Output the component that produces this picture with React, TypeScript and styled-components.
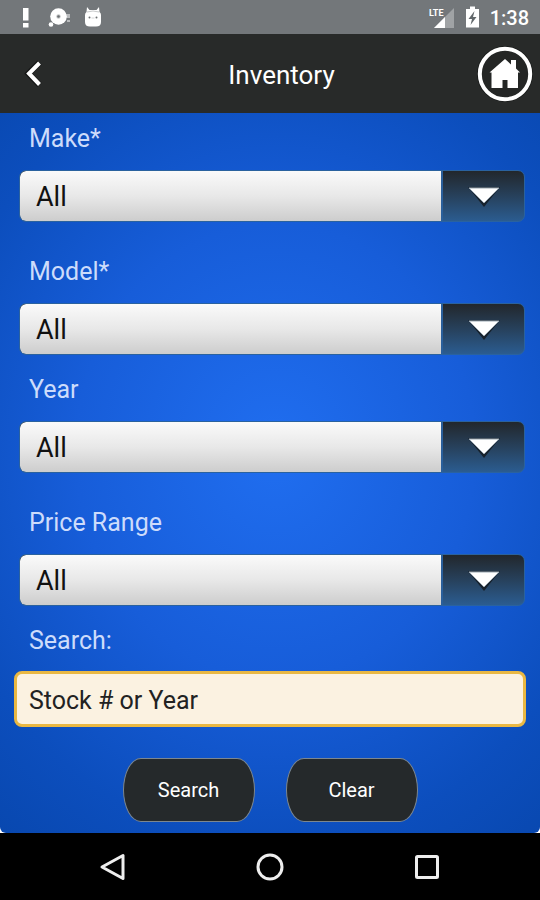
import React, { useState } from "react";
import styled, { createGlobalStyle } from "styled-components";

const GlobalStyle = createGlobalStyle`
  *, *::before, *::after { box-sizing: border-box; }
  body {
    margin: 0;
    font-family: Roboto, "Liberation Sans", sans-serif;
    background: #000;
  }
  button, input, select { font-family: inherit; }
`;

const Screen = styled.div`
  min-height: 100vh;
  display: flex;
  flex-direction: column;
`;

const StatusBar = styled.div`
  height: 34px;
  flex: none;
  display: flex;
  align-items: center;
  justify-content: space-between;
  padding: 0 11px 0 20px;
  background: #73777a;
  color: #fff;
`;

const StatusGroup = styled.div<{ $gap: number }>`
  display: flex;
  align-items: center;
  gap: ${(p) => p.$gap}px;
`;

const Clock = styled.time`
  font-size: 20px;
  line-height: 24px;
  font-weight: 500;
  padding-top: 2px;
`;

const Header = styled.header`
  height: 79px;
  flex: none;
  display: grid;
  grid-template-columns: 64px 1fr 64px;
  align-items: center;
  padding: 0 3px 0 2px;
  background: #282a29;
`;

const Title = styled.h1`
  margin: 0;
  color: #fff;
  font-size: 26px;
  line-height: 32px;
  font-weight: 400;
  text-align: center;
  padding: 2px 0 0 24px;
`;

const IconButton = styled.button`
  display: flex;
  align-items: center;
  justify-content: center;
  height: 64px;
  padding: 0;
  border: 0;
  background: transparent;
  cursor: pointer;
`;

const Backdrop = styled.div`
  flex: 1;
  display: flex;
  background: #fff;
`;

const Form = styled.form`
  flex: 1;
  display: flex;
  flex-direction: column;
  padding: 10px 14px 11px;
  border-radius: 0 0 6px 6px;
  background: radial-gradient(ellipse 82% 70% at 51% 47%, #206ef0 0%, #175dd9 45%, #0c4ebd 78%, #0847ae 100%);
`;

const FieldPair = styled.div`
  display: flex;
  flex-direction: column;
  gap: 34px;
  margin-bottom: 19px;
`;

const Field = styled.div<{ $gap: number }>`
  display: flex;
  flex-direction: column;
  gap: ${(p) => p.$gap}px;
`;

const Label = styled.label`
  padding-left: 15px;
  color: #cddcfb;
  font-size: 25px;
  line-height: 32px;
`;

const SelectFrame = styled.div`
  display: grid;
  grid-template-columns: 1fr 83px;
  height: 52px;
  margin: 0 1px 0 5px;
  border: 1px solid #2a629f;
  border-radius: 7px;
  overflow: hidden;
  background: linear-gradient(#22272c, #27415c 50%, #2b5c90);
`;

const Select = styled.select`
  grid-area: 1 / 1 / 2 / 3;
  appearance: none;
  width: 100%;
  height: 50px;
  padding: 2px 98px 0 16px;
  border: 0;
  border-radius: 6px;
  color: #111;
  font-size: 27px;
  background: linear-gradient(#fafafa, #e8e8e8 50%, #cdcdcd) left / calc(100% - 83px) 100% no-repeat;
  cursor: pointer;
`;

const ArrowCell = styled.span`
  grid-area: 1 / 2;
  display: flex;
  align-items: center;
  justify-content: center;
  border-left: 2px solid #2a5f9b;
  pointer-events: none;
  z-index: 1;
`;

const SearchInput = styled.input`
  height: 56px;
  width: 100%;
  padding: 2px 12px 0;
  border: 3px solid #e9b843;
  border-radius: 8px;
  background: #fbf2e1;
  color: #222;
  font-size: 25px;
  &::placeholder { color: #222; opacity: 1; }
`;

const Actions = styled.div`
  display: flex;
  justify-content: center;
  gap: 31px;
  margin-top: auto;
  padding-top: 28px;
`;

const ActionButton = styled.button`
  width: 132px;
  height: 64px;
  padding: 0;
  border: 1px solid #7c8790;
  border-radius: 18px / 32px;
  background: #25292b;
  color: #fff;
  font-size: 20px;
  cursor: pointer;
`;

const NavBar = styled.nav`
  height: 67px;
  flex: none;
  display: grid;
  grid-template-columns: repeat(3, 1fr);
  align-items: end;
  padding: 0 34px 1px;
  background: #000;
`;

const choices: Record<string, string[]> = {
  make: ["All"],
  model: ["All"],
  year: ["All"],
  price: ["All"],
};

function SelectField({ id, label }: { id: string; label: string }) {
  return (
    <Field $gap={15}>
      <Label htmlFor={id}>{label}</Label>
      <SelectFrame>
        <Select id={id} name={id}>
          {choices[id].map((c) => (
            <option key={c}>{c}</option>
          ))}
        </Select>
        <ArrowCell aria-hidden="true">
          <svg width="36" height="24" viewBox="0 0 36 24">
            <path d="M2 3H34L18 23Z" fill="#17222d" />
            <path d="M3 4H33L18 19Z" fill="#fff" stroke="#9aa7b2" strokeWidth="1" />
          </svg>
        </ArrowCell>
      </SelectFrame>
    </Field>
  );
}

export default function App() {
  const [query, setQuery] = useState("");
  return (
    <Screen>
      <GlobalStyle />
      <StatusBar>
        <StatusGroup $gap={14}>
          <svg width="12" height="22" viewBox="0 0 12 22" fill="#fff" aria-hidden="true">
            <path d="M3 2H8.500V14.500H3ZM3 17H8.500V21.500H3Z" />
          </svg>
          <svg width="24" height="22" viewBox="0 0 24 22" fill="#fff" aria-hidden="true">
            <circle cx="12.500" cy="10.500" r="8.300" />
            <circle cx="5" cy="18.500" r="2.300" />
            <path d="M20 8H24V12H20ZM21 14H24V16H21Z" opacity="0.5" />
            <circle cx="12.500" cy="10.500" r="2.200" fill="#c5c7c8" />
            <circle cx="12.500" cy="10.500" r="1.300" fill="#6c7072" />
          </svg>
          <svg width="18" height="22" viewBox="0 0 18 22" aria-hidden="true">
            <path d="M3 1L5.500 4H12.500L15 1L15.500 6Q17 7 17 9V16Q17 20.500 12 20.500H6Q1 20.500 1 16V9Q1 7 2.500 6Z" fill="#fff" />
            <path d="M3 6Q9 4 15 6" stroke="#c7c9ca" fill="none" />
            <circle cx="5.500" cy="11.500" r="1" fill="#6c7072" />
            <circle cx="12.500" cy="11.500" r="1" fill="#6c7072" />
            <path d="M7.500 12H10.500" stroke="#d5d7d8" />
          </svg>
        </StatusGroup>
        <StatusGroup $gap={10}>
          <svg width="26" height="24" viewBox="0 0 26 24" aria-label="LTE signal" role="img">
            <path d="M25 3V23H5Z" fill="#a0a3a5" />
            <path d="M16 12V23H5Z" fill="#fff" />
            <path d="M0 2H15V13H0Z" fill="#73777a" />
            <text x="0" y="11" fontSize="9" fontFamily="Roboto, sans-serif" fontWeight="700" fill="#fff">LTE</text>
          </svg>
          <svg width="15" height="22" viewBox="0 0 15 22" aria-hidden="true">
            <path d="M5 0.500H10V3H14V21.500H1V3H5Z" fill="#fff" />
            <path d="M9.500 5L3.500 13H7L5.500 19L11.500 11H8Z" fill="#62686b" />
          </svg>
          <Clock>1:38</Clock>
        </StatusGroup>
      </StatusBar>

      <Header>
        <IconButton type="button" aria-label="Back">
          <svg width="28" height="32" viewBox="0 0 28 32" fill="none">
            <path d="M19.500 4.500L8.500 15.500L19.500 27" stroke="#000" strokeWidth="6" opacity="0.5" />
            <path d="M19.500 5L9 15.500L19.500 26.500" stroke="#fff" strokeWidth="4" />
          </svg>
        </IconButton>
        <Title>Inventory</Title>
        <IconButton type="button" aria-label="Home">
          <svg width="58" height="58" viewBox="0 0 58 58">
            <circle cx="29" cy="29" r="28" fill="#171918" />
            <circle cx="29" cy="29" r="25.200" fill="#242625" stroke="#fff" strokeWidth="4" />
            <path d="M29 14L35 19.500V15H40V23.500L44 27.500H42V43H31.500V35H26.500V43H15.500V27.500H13.500Z" fill="#fff" />
          </svg>
        </IconButton>
      </Header>

      <Backdrop>
        <Form onSubmit={(e) => e.preventDefault()} onReset={() => setQuery("")}>
          <FieldPair>
            <SelectField id="make" label="Make*" />
            <SelectField id="model" label="Model*" />
          </FieldPair>
          <FieldPair>
            <SelectField id="year" label="Year" />
            <SelectField id="price" label="Price Range" />
          </FieldPair>
          <Field $gap={14}>
            <Label htmlFor="search">Search:</Label>
            <SearchInput
              id="search"
              placeholder="Stock # or Year"
              value={query}
              onChange={(e) => setQuery(e.target.value)}
            />
          </Field>
          <Actions>
            <ActionButton type="submit">Search</ActionButton>
            <ActionButton type="reset">Clear</ActionButton>
          </Actions>
        </Form>
      </Backdrop>

      <NavBar aria-label="System">
        <IconButton type="button" aria-label="System back">
          <svg width="28" height="28" viewBox="0 0 28 28" fill="none">
            <path d="M24 2.500V25.500L3 14Z" stroke="#eee" strokeWidth="3" strokeLinejoin="round" />
          </svg>
        </IconButton>
        <IconButton type="button" aria-label="System home">
          <svg width="28" height="28" viewBox="0 0 28 28" fill="none">
            <circle cx="14" cy="14" r="12" stroke="#eee" strokeWidth="3" />
          </svg>
        </IconButton>
        <IconButton type="button" aria-label="Recent apps">
          <svg width="28" height="28" viewBox="0 0 28 28" fill="none">
            <rect x="3.500" y="3.500" width="21" height="21" rx="1" stroke="#eee" strokeWidth="3" />
          </svg>
        </IconButton>
      </NavBar>
    </Screen>
  );
}
